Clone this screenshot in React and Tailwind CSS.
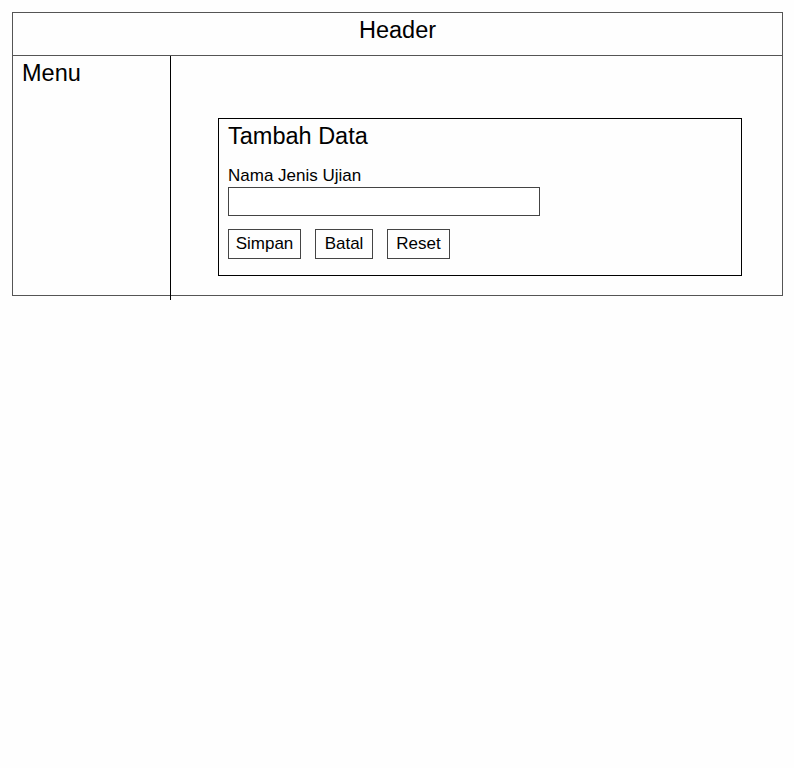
import React from "react";

export default function App() {
  return (
    <div
      className="min-h-[768px] w-[794px] bg-[#fefefe] pt-[12px] pl-[12px] text-black"
      style={{ fontFamily: '"Liberation Sans", Arial, sans-serif' }}
    >
      <div className="w-[771px] border border-[#555]">
        <div className="flex h-[43px] items-start justify-center border-b border-[#555] pt-[2px] text-[23.5px] leading-[30px]">
          Header
        </div>
        <div className="flex h-[239px] items-start">
          <div className="h-[244px] w-[158px] shrink-0 border-r border-black pl-[9px] pt-[3px] text-[23.5px] leading-[28px]">
            Menu
          </div>
          <div className="pl-[47px] pt-[62px]">
            <div className="h-[158px] w-[524px] border border-black pl-[9px] pt-[2px]">
              <div className="text-[23.5px] leading-[30px]">Tambah Data</div>
              <div className="mt-[15px] text-[17px] leading-[19px]">Nama Jenis Ujian</div>
              <div className="mt-[2px] h-[29px] w-[312px] border border-[#444] bg-white"></div>
              <div className="mt-[13px] flex gap-[14px]">
                <div className="flex h-[30px] w-[73px] items-center justify-center border border-[#444] text-[17px]">
                  Simpan
                </div>
                <div className="flex h-[30px] w-[58px] items-center justify-center border border-[#444] text-[17px]">
                  Batal
                </div>
                <div className="flex h-[30px] w-[63px] items-center justify-center border border-[#444] text-[17px]">
                  Reset
                </div>
              </div>
            </div>
          </div>
        </div>
      </div>
    </div>
  );
}
